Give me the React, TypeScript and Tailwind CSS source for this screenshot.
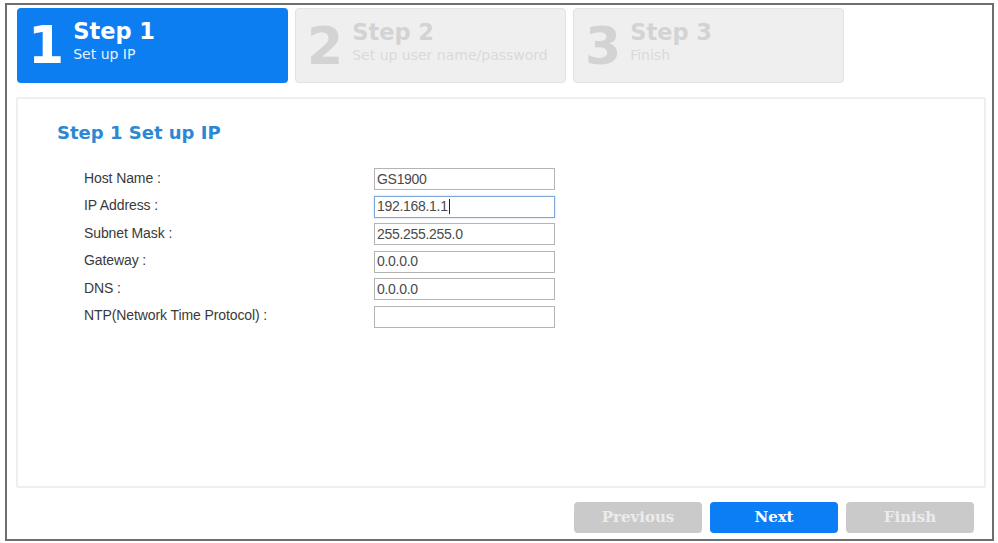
import React from "react";

const sans = { fontFamily: '"DejaVu Sans", Verdana, sans-serif' };
const arial = { fontFamily: '"Liberation Sans", Arial, sans-serif' };
const serif = { fontFamily: '"DejaVu Serif", Georgia, serif' };

type Step = { n: string; title: string; sub: string; active?: boolean };

const steps: Step[] = [
  { n: "1", title: "Step 1", sub: "Set up IP", active: true },
  { n: "2", title: "Step 2", sub: "Set up user name/password" },
  { n: "3", title: "Step 3", sub: "Finish" },
];

const fields = [
  { label: "Host Name :", value: "GS1900" },
  { label: "IP Address :", value: "192.168.1.1", focused: true },
  { label: "Subnet Mask :", value: "255.255.255.0" },
  { label: "Gateway :", value: "0.0.0.0" },
  { label: "DNS :", value: "0.0.0.0" },
  { label: "NTP(Network Time Protocol) :", value: "" },
];

function StepTab({ s }: { s: Step }) {
  return (
    <div
      className={
        "flex h-[75px] w-[271px] items-start rounded-[4px] pl-[11px] pt-[4px] " +
        (s.active
          ? "bg-[#0c7ef2] text-white"
          : "border border-[#e2e2e2] bg-[#efefef] text-[#d3d3d3]")
      }
      style={sans}
    >
      <div className="text-[52px] font-bold leading-[66px]">{s.n}</div>
      <div className="ml-[9px] flex flex-col pt-[6px]">
        <div className="text-[22.5px] font-bold leading-[26px]">{s.title}</div>
        <div
          className={
            "mt-[2px] whitespace-nowrap text-[14px] leading-[16px] " +
            (s.active ? "text-[#e6f1ff]" : "text-[#dadada]")
          }
        >
          {s.sub}
        </div>
      </div>
    </div>
  );
}

export default function App() {
  return (
    <div className="h-[543px] w-[998px] overflow-hidden bg-white">
      <div className="ml-[5px] mt-[3px] flex h-[538px] w-[989px] flex-col border-2 border-[#6e6e6e]">
        {/* step tabs */}
        <div className="flex gap-[7px] pl-[10px] pt-[3px]">
          {steps.map((s) => (
            <StepTab key={s.n} s={s} />
          ))}
        </div>

        {/* form panel */}
        <div className="ml-[9px] mr-[6px] mt-[14px] h-[391px] rounded-[2px] border-2 border-[#efefef] pl-[39px] pt-[23px]">
          <div className="text-[18px] font-bold leading-[22px] text-[#2b88d4]" style={sans}>
            Step 1 Set up IP
          </div>
          <div className="ml-[27px] mt-[24px] flex flex-col gap-[5.5px]" style={arial}>
            {fields.map((f) => (
              <div key={f.label} className="flex h-[22px] items-center">
                <div className="-mt-[2px] w-[290px] text-[14px] tracking-[-0.1px] text-[#3a3a3a]">
                  {f.label}
                </div>
                <div
                  className={
                    "flex h-[22px] w-[181px] items-center border bg-white pl-[2px] text-[14px] tracking-[-0.3px] text-[#4a4a4a] " +
                    (f.focused
                      ? "border-[#7fa7d9] shadow-[0_0_2px_#b8d2f0]"
                      : "border-[#b4b4b4]")
                  }
                >
                  {f.value}
                  {f.focused && <span className="ml-[1px] inline-block h-[15px] w-[1px] bg-[#222]" />}
                </div>
              </div>
            ))}
          </div>
        </div>

        {/* wizard buttons */}
        <div className="mt-auto flex justify-end gap-[8px] pb-[6px] pr-[18px]" style={serif}>
          <div className="flex h-[31px] w-[128px] items-center justify-center rounded-[4px] bg-[#cacaca] text-[15px] font-bold text-[#ececec]">
            Previous
          </div>
          <div className="flex h-[31px] w-[128px] items-center justify-center rounded-[4px] bg-[#0b7ef5] text-[15px] font-bold text-white">
            Next
          </div>
          <div className="flex h-[31px] w-[128px] items-center justify-center rounded-[4px] bg-[#cacaca] text-[15px] font-bold text-[#ececec]">
            Finish
          </div>
        </div>
      </div>
    </div>
  );
}
